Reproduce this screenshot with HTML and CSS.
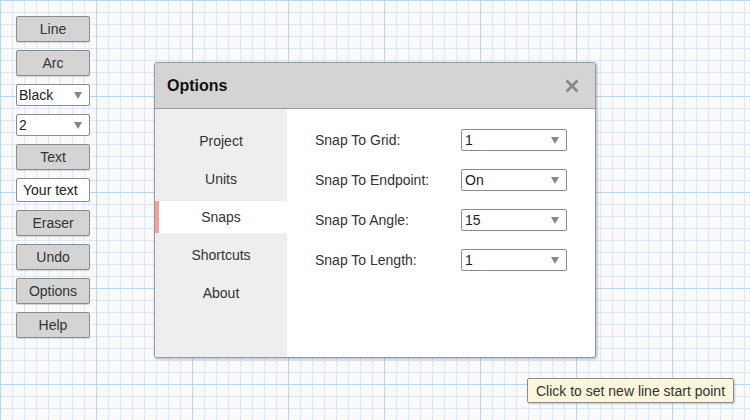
FILE: index.html
```html
<!DOCTYPE html>
<html>
<head>
<meta charset="utf-8">
<link rel="stylesheet" href="styles.css">
</head>
<body>
<div class="canvas">
  <div class="toolbar">
    <button class="btn">Line</button>
    <button class="btn">Arc</button>
    <div class="select small"><span>Black</span><i class="arrow"></i></div>
    <div class="select small"><span>2</span><i class="arrow"></i></div>
    <button class="btn">Text</button>
    <div class="textinput">Your text</div>
    <button class="btn">Eraser</button>
    <button class="btn">Undo</button>
    <button class="btn">Options</button>
    <button class="btn">Help</button>
  </div>

  <div class="dialog">
    <div class="dialog-header">
      <span class="dialog-title">Options</span>
      <svg class="close" width="14" height="14" viewBox="0 0 14 14"><path d="M1.5 1.5 L12.5 12.5 M12.5 1.5 L1.5 12.5" stroke="#888" stroke-width="2.6" stroke-linecap="butt"/></svg>
    </div>
    <div class="dialog-body">
      <div class="sidebar">
        <div class="tab">Project</div>
        <div class="tab">Units</div>
        <div class="tab active">Snaps</div>
        <div class="tab">Shortcuts</div>
        <div class="tab">About</div>
      </div>
      <div class="content">
        <div class="row"><span class="label">Snap To Grid:</span><div class="select wide"><span>1</span><i class="arrow"></i></div></div>
        <div class="row"><span class="label">Snap To Endpoint:</span><div class="select wide"><span>On</span><i class="arrow"></i></div></div>
        <div class="row"><span class="label">Snap To Angle:</span><div class="select wide"><span>15</span><i class="arrow"></i></div></div>
        <div class="row"><span class="label">Snap To Length:</span><div class="select wide"><span>1</span><i class="arrow"></i></div></div>
      </div>
    </div>
  </div>

  <div class="tooltip">Click to set new line start point</div>
</div>
</body>
</html>
```
FILE: styles.css
```css
* { box-sizing: border-box; }
html, body {
  margin: 0;
  padding: 0;
  width: 750px;
  height: 420px;
  overflow: hidden;
}
body {
  font-family: "Liberation Sans", Arial, sans-serif;
  font-size: 14px;
  color: #333;
}
.canvas {
  position: relative;
  width: 750px;
  height: 420px;
  background-color: #fafafa;
  background-image:
    linear-gradient(to right, #b5d6f5 1px, transparent 1px),
    linear-gradient(to bottom, #b5d6f5 1px, transparent 1px),
    linear-gradient(to right, #d6e9fb 1px, transparent 1px),
    linear-gradient(to bottom, #d6e9fb 1px, transparent 1px);
  background-size: 96px 96px, 96px 96px, 12px 12px, 12px 12px;
  padding: 16px;
}
.toolbar {
  display: flex;
  flex-direction: column;
  gap: 8px;
  width: 74px;
}
.btn {
  width: 74px;
  height: 26px;
  margin: 0;
  padding: 0;
  background: #d4d4d4;
  border: 1px solid #8c8c8c;
  border-radius: 2px;
  box-shadow: 0 1px 1px rgba(0,0,0,0.15);
  font-family: "Liberation Sans", Arial, sans-serif;
  font-size: 14px;
  color: #333;
}
.select {
  position: relative;
  display: flex;
  align-items: center;
  height: 22px;
  background: #fff;
  border: 1px solid #8c8c8c;
  border-radius: 2px;
  color: #222;
}
.select.small { width: 74px; padding-left: 2px; }
.select.wide { width: 106px; padding-left: 3px; }
.select span { flex: 1; }
.arrow {
  width: 0;
  height: 0;
  border-left: 4px solid transparent;
  border-right: 4px solid transparent;
  border-top: 7px solid #888;
  margin-right: 7px;
}
.textinput {
  width: 74px;
  height: 24px;
  background: #fff;
  border: 1px solid #8c8c8c;
  border-radius: 2px;
  padding-left: 6px;
  display: flex;
  align-items: center;
  color: #222;
}
.dialog {
  position: absolute;
  left: 154px;
  top: 62px;
  width: 442px;
  height: 296px;
  background: #fff;
  border: 1px solid #9a9a9a;
  border-radius: 3px;
  box-shadow: 1px 1px 3px rgba(0,0,0,0.3);
  display: flex;
  flex-direction: column;
  overflow: hidden;
}
.dialog-header {
  height: 46px;
  flex: none;
  background: #d4d4d4;
  border-bottom: 1px solid #9a9a9a;
  display: flex;
  align-items: center;
  justify-content: space-between;
  padding: 0 16px 0 12px;
}
.dialog-title {
  font-weight: bold;
  font-size: 16px;
  color: #111;
}
.close { display: block; margin-top: 1px; }
.dialog-body {
  flex: 1;
  display: flex;
}
.sidebar {
  width: 132px;
  background: #eeeeee;
  padding-top: 16px;
  display: flex;
  flex-direction: column;
  gap: 6px;
}
.tab {
  height: 32px;
  display: flex;
  align-items: center;
  justify-content: center;
  color: #333;
}
.tab.active {
  background: #fff;
  border-left: 4px solid #f4a09a;
  padding-right: 4px;
}
.content {
  flex: 1;
  padding: 20px 0 0 28px;
  display: flex;
  flex-direction: column;
  gap: 18px;
}
.row {
  display: flex;
  align-items: center;
  height: 22px;
}
.label {
  width: 146px;
  color: #333;
}
.tooltip {
  position: absolute;
  left: 527px;
  top: 378px;
  width: 207px;
  height: 25px;
  background: #fbf6dc;
  border: 1px solid #8c8c8c;
  border-radius: 2px;
  box-shadow: 1px 1px 2px rgba(0,0,0,0.2);
  display: flex;
  align-items: center;
  justify-content: center;
  color: #333;
}
```
